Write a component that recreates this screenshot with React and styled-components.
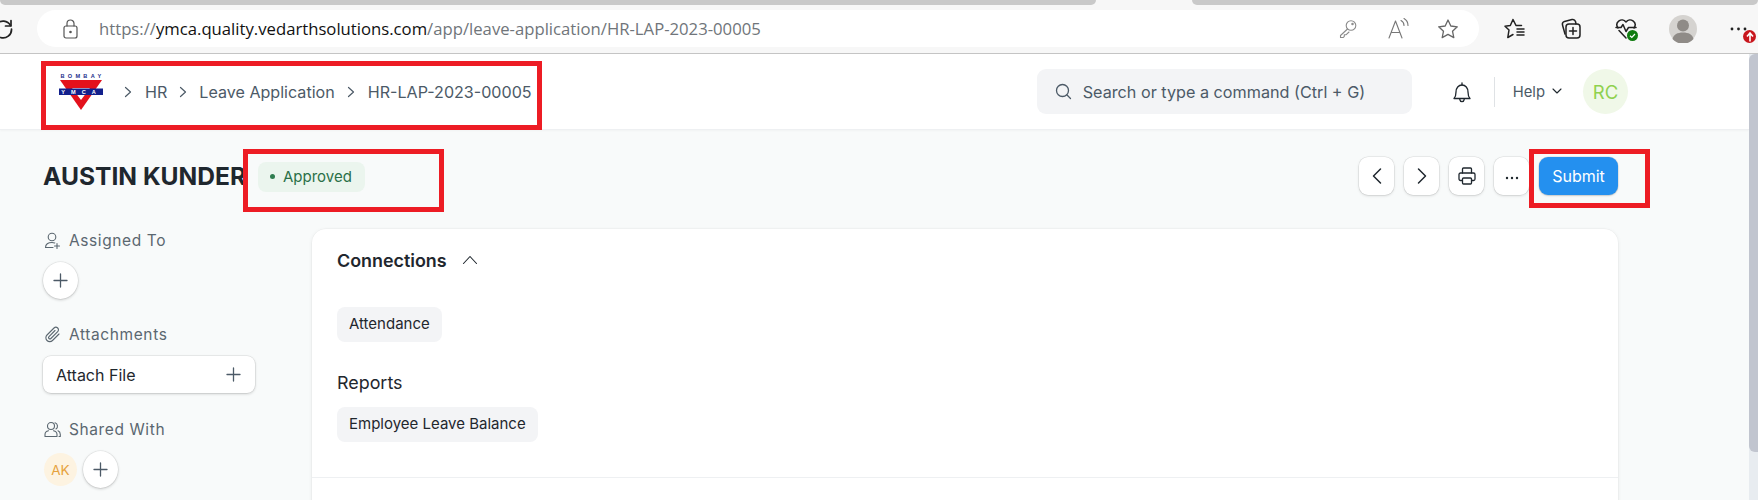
import React from "react";
import styled, { createGlobalStyle } from "styled-components";

const Global = createGlobalStyle`
  html, body { margin: 0; padding: 0; background: #f8fafa; }
  #root { width: 1758px; height: 500px; overflow: hidden; }
  * { box-sizing: border-box; }
`;

const Window = styled.div`
  width: 1758px; height: 500px; display: flex; flex-direction: column;
  position: relative; overflow: hidden;
  font-family: Inter, "Liberation Sans", sans-serif; background: #f8fafa;
`;
const TabStrip = styled.div`
  height: 5px; display: flex; background: #f7f7f7; flex: none;
`;
const Tab = styled.div`
  height: 5px; background: #c9c9c9; border-radius: 0 0 5px 5px;
  width: ${p => p.$w}px; margin-left: ${p => p.$gap || 0}px; flex: ${p => (p.$grow ? 1 : "none")};
`;
const BrowserBar = styled.div`
  height: 49px; flex: none; display: flex; align-items: flex-start; background: #f7f7f7;
  border-bottom: 1px solid #c4c4c4; padding-top: 5px; overflow: hidden;
`;
const Reload = styled.div`
  width: 37px; height: 37px; flex: none; display: flex; align-items: center; overflow: hidden;
`;
const AddressPill = styled.div`
  width: 1442px; height: 37px; flex: none; background: #fff; border-radius: 19px;
  display: flex; align-items: center; padding: 0 6px 0 26px;
`;
const Url = styled.div`
  font-family: "Open Sans", "Liberation Sans", sans-serif; font-size: 16.7px; color: #70757a;
  margin-left: 21px; white-space: nowrap; flex: 1;
  b { font-weight: 400; color: #111; }
`;
const PillSlot = styled.div`
  width: 50px; display: flex; justify-content: center; align-items: center; flex: none;
`;
const ToolSlots = styled.div`
  display: flex; margin-left: 8px; height: 37px; flex: none;
`;
const ToolSlot = styled.div`
  width: 56px; height: 37px; display: flex; align-items: center; justify-content: center;
  position: relative; flex: none;
`;
const Badge = styled.div`
  position: absolute; left: 32px; top: 20px; width: 13px; height: 13px; border-radius: 50%;
  background: #c8161d; display: flex; align-items: center; justify-content: center;
`;

const Viewport = styled.div`
  flex: 1; display: flex; min-height: 0;
`;
const Main = styled.div`
  flex: 1; min-width: 0; display: flex; flex-direction: column;
`;
const Scrollbar = styled.div`
  width: 9px; flex: none; background: #e8ecf0; 
`;
const Thumb = styled.div`
  height: 398px; background: #c1c5cf; border-radius: 6px 0 0 6px;
`;

const Navbar = styled.header`
  height: 76px; flex: none; background: #fff; border-bottom: 1px solid #eef0f2;
  box-shadow: 0 1px 2px rgba(0,0,0,.03);
  display: flex; align-items: center; padding: 0 121px 0 59px;
`;
const Crumbs = styled.nav`
  display: flex; align-items: center; margin-left: 18px; color: #4c5a67; font-size: 16.1px;
`;
const Crumb = styled.span`
  margin-left: ${p => p.$ml}px; white-space: nowrap; line-height: 20px;
`;
const CrumbSep = styled.svg`
  width: 10px; height: 12px; margin-left: ${p => p.$ml || 0}px; flex: none;
`;
const Search = styled.div`
  margin-left: auto; width: 375px; height: 45px; background: #f3f4f6; border-radius: 9px;
  display: flex; align-items: center; padding-left: 18px; color: #4c5a67; font-size: 16.2px;
`;
const SearchText = styled.span`
  margin-left: 11px; white-space: nowrap;
`;
const Bell = styled.div`
  margin-left: 39px; width: 22px; display: flex; justify-content: center;
`;
const NavDivider = styled.div`
  width: 1px; height: 30px; background: #dfe2e5; margin-left: 21px;
`;
const Help = styled.div`
  margin-left: 18px; display: flex; align-items: center; gap: 7px; color: #4c5a67; font-size: 14.8px;
`;
const Avatar = styled.div`
  width: ${p => p.$size}px; height: ${p => p.$size}px; border-radius: 50%; background: ${p => p.$bg};
  color: ${p => p.$fg}; font-size: ${p => p.$fs}px; display: flex; align-items: center;
  justify-content: center; flex: none; margin-left: ${p => p.$ml || 0}px;
`;

const PageHead = styled.div`
  display: flex; align-items: center; height: 38px; margin-top: 27px; padding: 0 131px 0 43px; flex: none;
`;
const Title = styled.h1`
  margin: -1px 0 0; font-size: 24.6px; font-weight: 700; color: #1f272e; white-space: nowrap; line-height: 32px;
  width: 215px; overflow: hidden;
`;
const Indicator = styled.div`
  height: 30px; width: 107px; border-radius: 8px; background: #ebf5ee; color: #2a7048; font-size: 15px;
  display: flex; align-items: center; padding-left: 12px; gap: 8px; margin-top: 1px;
`;
const Dot = styled.span`
  width: 5px; height: 5px; border-radius: 50%; background: #2f7d50;
`;
const Actions = styled.div`
  margin-left: auto; display: flex; gap: 10px;
`;
const IconButton = styled.button`
  width: 35px; height: 38px; background: #fff; border: none; border-radius: 9px; padding: 0;
  display: flex; align-items: center; justify-content: center;
  box-shadow: 0 0 0 .5px rgba(0,0,0,.1), 0 1px 3px rgba(0,0,0,.13);
`;
const Dots = styled.span`
  margin-top: 3px; display: block;
`;
const Submit = styled.button`
  width: 79px; height: 38px; background: #2490ef; color: #fff; border: none; border-radius: 9px;
  padding: 0; font: 400 16px Inter, sans-serif;
  box-shadow: 0 0 0 .5px rgba(0,0,0,.1), 0 1px 2px rgba(0,0,0,.15);
`;

const Body = styled.div`
  flex: 1; display: flex; margin-top: 34px; padding-left: 44px; min-height: 0;
`;
const Sidebar = styled.aside`
  width: 268px; flex: none; padding-top: 1px;
`;
const SideLabel = styled.div`
  height: 20px; display: flex; align-items: center; gap: 8px; color: #5b6770; font-size: 15.5px;
  letter-spacing: .6px; margin-top: ${p => p.$mt || 0}px; margin-bottom: ${p => p.$mb}px;
  white-space: nowrap;
`;
const RoundAdd = styled.button`
  width: 35px; height: 37px; border-radius: 50%; background: #fff; border: none; padding: 0;
  display: flex; align-items: center; justify-content: center; flex: none; margin-left: ${p => p.$ml || 0}px;
  box-shadow: 0 0 0 .5px rgba(0,0,0,.08), 0 1px 3px rgba(0,0,0,.2);
`;
const AttachBtn = styled.button`
  width: 212px; height: 37px; margin-left: -1px; background: #fff; border: none; border-radius: 8px;
  display: flex; align-items: center; justify-content: space-between; padding: 0 14px 0 13px;
  font: 400 16px Inter, sans-serif; color: #1f272e;
  box-shadow: 0 0 0 .5px rgba(0,0,0,.1), 0 1px 3px rgba(0,0,0,.18);
`;
const ShareRow = styled.div`
  display: flex; align-items: center;
`;
const Card = styled.section`
  width: 1306px; flex: none; height: 320px; background: #fff; border-radius: 14px 14px 0 0;
  box-shadow: 0 0 0 .5px rgba(0,0,0,.04), 0 1px 4px rgba(0,0,0,.07);
  padding-top: 19px;
`;
const CardHead = styled.div`
  display: flex; align-items: center; height: 24px; padding-left: 25px; gap: 15px;
  font-size: 17.9px; font-weight: 600; color: #1f272e;
`;
const Pill = styled.div`
  display: inline-flex; align-items: center; height: 35px; padding: 0 12px 2px; border-radius: 8px;
  background: #f3f4f6; font-size: 15px; color: #1f272e; margin: ${p => p.$mt}px 0 0 25px; white-space: nowrap;
`;
const Reports = styled.div`
  height: 24px; display: flex; align-items: center; padding-left: 25px; margin-top: 28px;
  font-size: 17.9px; color: #1f272e; font-weight: 400;
`;
const CardRule = styled.hr`
  border: 0; border-top: 1px solid #eef0f2; margin: 35px 0 0;
`;

const RedBox = styled.div`
  position: absolute; border: 5px solid #ed1c24; pointer-events: none;
  left: ${p => p.$x}px; top: ${p => p.$y}px; width: ${p => p.$w}px; height: ${p => p.$h}px;
`;

const Svg = ({ w, h = w, vb, sw = 1.3, stroke = "#4c5a67", fill = "none", children }) => (
  <svg width={w} height={h} viewBox={vb || `0 0 ${w} ${h}`} fill={fill} stroke={stroke} strokeWidth={sw}
    strokeLinecap="round" strokeLinejoin="round" style={{ flex: "none", display: "block" }}>
    {children}
  </svg>
);

const Plus = ({ size = 15, color = "#4c5a67" }) => (
  <Svg w={size} vb="0 0 15 15" sw={1.3} stroke={color}><path d="M7.5 1v13M1 7.5h13" /></Svg>
);

const Sep = ({ ml }) => (
  <CrumbSep $ml={ml} viewBox="0 0 10 12" fill="none" stroke="#4c5a67" strokeWidth="1.2" strokeLinecap="round" strokeLinejoin="round">
    <path d="M2.5 1.5 7.5 6l-5 4.5" />
  </CrumbSep>
);

const Logo = () => (
  <svg width="46" height="38" viewBox="0 0 46 38" style={{ flex: "none", display: "block" }}>
    <text x="23.5" y="5.4" textAnchor="middle" fontFamily="Liberation Sans, sans-serif" fontWeight="700" fontSize="5.6" letterSpacing="3.3" fill="#1c2f8c">BOMBAY</text>
    <path d="M1 7h42L22 37z" fill="#e3111c" />
    <path d="M13 15h18l-9 12z" fill="#fff" />
    <rect x="0" y="15.5" width="44" height="6.500" fill="#12208c" />
    <text x="22.5" y="21" textAnchor="middle" fontFamily="Liberation Sans, sans-serif" fontWeight="700" fontSize="5.6" letterSpacing="6" fill="#fff">YMCA</text>
  </svg>
);

export default function App() {
  return (
    <Window>
      <Global />
      <TabStrip>
        <Tab $w={1096} />
        <Tab $gap={96} $grow />
      </TabStrip>
      <BrowserBar>
        <Reload>
          <div style={{ marginLeft: -7 }}>
            <Svg w={20} sw={1.7} stroke="#222"><path d="M17.5 6.5A8.4 8.4 0 1 0 18.5 10" /><path d="M18 1.5v5.5h-5.5" /></Svg>
          </div>
        </Reload>
        <AddressPill>
          <Svg w={15} h={20} sw={1.2} stroke="#555"><rect x="1" y="7" width="13" height="12" rx="2" /><path d="M4 7V4.5a3.5 3.5 0 0 1 7 0V7" /><circle cx="7.5" cy="13" r=".7" fill="#555" /></Svg>
          <Url>https://<b>ymca.quality.vedarthsolutions.com</b>/app/leave-application/HR-LAP-2023-00005</Url>
          <PillSlot>
            <Svg w={20} sw={1.1} stroke="#8a8a8a"><circle cx="13" cy="6.5" r="4.8" /><circle cx="14.5" cy="5" r=".7" /><path d="M9.5 10 2.5 16.500v2h2.800l1-1.200v-1.500h1.600L11 13" /></Svg>
          </PillSlot>
          <PillSlot>
            <Svg w={24} sw={1.1} stroke="#777"><path d="M3 21 9.500 4 16 21M5.500 15.500h8" /><path d="M15 3.500c2 1 3 2.800 3 5M18 1.500c2.600 1.500 4 4 4 7" /></Svg>
          </PillSlot>
          <PillSlot>
            <Svg w={22} sw={1.3} stroke="#666"><path d="m11 2 2.800 6 6.500.8-4.800 4.400 1.300 6.400L11 16.400l-5.800 3.200 1.300-6.400L1.700 8.800 8.200 8z" /></Svg>
          </PillSlot>
        </AddressPill>
        <ToolSlots>
          <ToolSlot>
            <Svg w={22} sw={1.5} stroke="#222"><path d="M12 7.500 9 1.500 6.300 7.500 1 8.200 5 12l-1.200 7.500L9 16.500M12 7.500h5.500" /><path d="M13 11h7M13 14h7M13 17h7" /></Svg>
          </ToolSlot>
          <ToolSlot>
            <Svg w={22} sw={1.5} stroke="#222"><path d="M5 16 2.500 7a3 3 0 0 1 2-3.600L12 1.500a3 3 0 0 1 3.500 2L16 6" /><rect x="6" y="6" width="14" height="14" rx="3" /><path d="M13 9.500v7M9.500 13h7" /></Svg>
          </ToolSlot>
          <ToolSlot>
            <div style={{ position: "relative", marginLeft: -3 }}>
              <Svg w={22} sw={1.5} stroke="#222"><path d="M11 20 4 12.500M3 10C-1 4 7-1 11 4c4-5 12 0 8 6" /><path d="M1 9.500h5l2-3 3 7 2.500-4H21" /></Svg>
              <svg width="11" height="11" viewBox="0 0 11 11" style={{ position: "absolute", right: -1, bottom: -1 }}>
                <circle cx="5.500" cy="5.500" r="5.500" fill="#107c10" /><path d="m3 5.700 1.800 1.700L8 4" fill="none" stroke="#fff" strokeWidth="1.200" />
              </svg>
            </div>
          </ToolSlot>
          <ToolSlot>
            <svg width="28" height="28" viewBox="0 0 28 28" style={{ display: "block" }}>
              <circle cx="14" cy="14" r="14" fill="#d5d3d0" />
              <circle cx="14" cy="10.500" r="6" fill="#8f8b87" />
              <path d="M3.500 24c1-4.500 5-6.500 10.500-6.500S23.500 19.500 24.500 24a14 14 0 0 1-21 0z" fill="#8f8b87" />
            </svg>
          </ToolSlot>
          <ToolSlot>
            <Svg w={22} h={6} sw={0} stroke="none" fill="#222"><circle cx="4" cy="3" r="1.400" /><circle cx="10.500" cy="3" r="1.400" /><circle cx="17" cy="3" r="1.400" /></Svg>
            <Badge>
              <svg width="8" height="10" viewBox="0 0 8 10"><path d="M4 9.500V2M1 4.500 4 1l3 3.500" fill="none" stroke="#fff" strokeWidth="1.600" /></svg>
            </Badge>
          </ToolSlot>
        </ToolSlots>
      </BrowserBar>

      <Viewport>
        <Main>
          <Navbar>
            <Logo />
            <Crumbs>
              <Sep ml={0} />
              <Crumb $ml={12}>HR</Crumb>
              <Sep ml={11} />
              <Crumb $ml={11}>Leave Application</Crumb>
              <Sep ml={11} />
              <Crumb $ml={12}>HR-LAP-2023-00005</Crumb>
            </Crumbs>
            <Search>
              <Svg w={17} sw={1.3} stroke="#4c5a67"><circle cx="7.500" cy="7.500" r="6" /><path d="m12 12 3.500 3.500" /></Svg>
              <SearchText>Search or type a command (Ctrl + G)</SearchText>
            </Search>
            <Bell>
              <Svg w={20} h={22} sw={1.3} stroke="#1f272e"><path d="M2 17.500c1.500-1.500 2-3 2-6.500 0-4 2.500-7 6-7s6 3 6 7c0 3.500.500 5 2 6.500z" /><path d="M10 4V1.800M7.800 18.500c.3 1.500 1.200 2.200 2.200 2.200s1.900-.7 2.200-2.200" /></Svg>
            </Bell>
            <NavDivider />
            <Help>
              <span>Help</span>
              <Svg w={10} h={7} sw={1.100} stroke="#1f272e"><path d="m1 1 4 4 4-4" /></Svg>
            </Help>
            <Avatar $size={45} $bg="#f0f8e8" $fg="#8fd14f" $fs={18.500} $ml={21}>RC</Avatar>
          </Navbar>

          <PageHead>
            <Title>AUSTIN KUNDER</Title>
            <Indicator><Dot />Approved</Indicator>
            <Actions>
              <IconButton aria-label="Previous">
                <Svg w={12} h={18} sw={1.500} stroke="#1f272e"><path d="M9.500 2 2.500 9l7 7" /></Svg>
              </IconButton>
              <IconButton aria-label="Next">
                <Svg w={12} h={18} sw={1.500} stroke="#1f272e"><path d="m2.500 2 7 7-7 7" /></Svg>
              </IconButton>
              <IconButton aria-label="Print">
                <Svg w={18} sw={1.300} stroke="#1f272e"><path d="M4.500 6V2a1 1 0 0 1 1-1h7a1 1 0 0 1 1 1v4" /><rect x="1" y="6" width="16" height="7.500" rx="1.500" /><rect x="4.500" y="11" width="9" height="6" rx="1" fill="#fff" /></Svg>
              </IconButton>
              <IconButton aria-label="More">
                <Dots><Svg w={14} h={4} sw={0} stroke="none" fill="#1f272e"><circle cx="2" cy="2" r="1.200" /><circle cx="7" cy="2" r="1.200" /><circle cx="12" cy="2" r="1.200" /></Svg></Dots>
              </IconButton>
              <Submit>Submit</Submit>
            </Actions>
          </PageHead>

          <Body>
            <Sidebar>
              <SideLabel $mb={12}>
                <Svg w={17} sw={1.100} stroke="#5b6770"><circle cx="8" cy="5" r="3.800" /><path d="M1.500 15.500c0-3.500 2.500-5 6.500-5 1 0 2 .1 2.800.4M1.500 15.500H9M13 11.500v5M10.500 14h5" /></Svg>
                Assigned To
              </SideLabel>
              <RoundAdd $ml={-1} aria-label="Assign"><Plus /></RoundAdd>
              <SideLabel $mt={25} $mb={12}>
                <Svg w={17} sw={1.100} stroke="#5b6770"><path d="M15 8 8.500 14.500a3.800 3.800 0 0 1-5.500-5.500l7-7a2.600 2.600 0 0 1 3.700 3.700l-6.800 6.800a1.300 1.300 0 0 1-1.900-1.900L11 4.500" /></Svg>
                Attachments
              </SideLabel>
              <AttachBtn>Attach File<Plus /></AttachBtn>
              <SideLabel $mt={26} $mb={12}>
                <Svg w={17} sw={1.100} stroke="#5b6770"><circle cx="7" cy="5" r="3.500" /><path d="M1 15.500v-2c0-2 2-3.500 3.500-3.800M13 15.500v-2c0-2-2-3.500-3.500-3.800M1 15.500h12M11 1.800a3.500 3.500 0 0 1 1 6.200M14 9.800c1.300.5 2.300 1.700 2.300 3.700v2H15" /></Svg>
                Shared With
              </SideLabel>
              <ShareRow>
                <Avatar $size={33} $bg="#fdf3e1" $fg="#e6a23c" $fs={13.500}>AK</Avatar>
                <RoundAdd $ml={6} aria-label="Share"><Plus /></RoundAdd>
              </ShareRow>
            </Sidebar>
            <Card>
              <CardHead>
                Connections
                <Svg w={16} h={10} sw={1.100} stroke="#1f272e"><path d="m1.500 8.500 6.500-7 6.500 7" /></Svg>
              </CardHead>
              <div><Pill $mt={35}>Attendance</Pill></div>
              <Reports>Reports</Reports>
              <div><Pill $mt={13}>Employee Leave Balance</Pill></div>
              <CardRule />
            </Card>
          </Body>
        </Main>
        <Scrollbar><Thumb /></Scrollbar>
      </Viewport>

      <RedBox $x={41} $y={61} $w={501} $h={69} />
      <RedBox $x={243} $y={149} $w={201} $h={63} />
      <RedBox $x={1529} $y={149} $w={121} $h={59} />
    </Window>
  );
}
